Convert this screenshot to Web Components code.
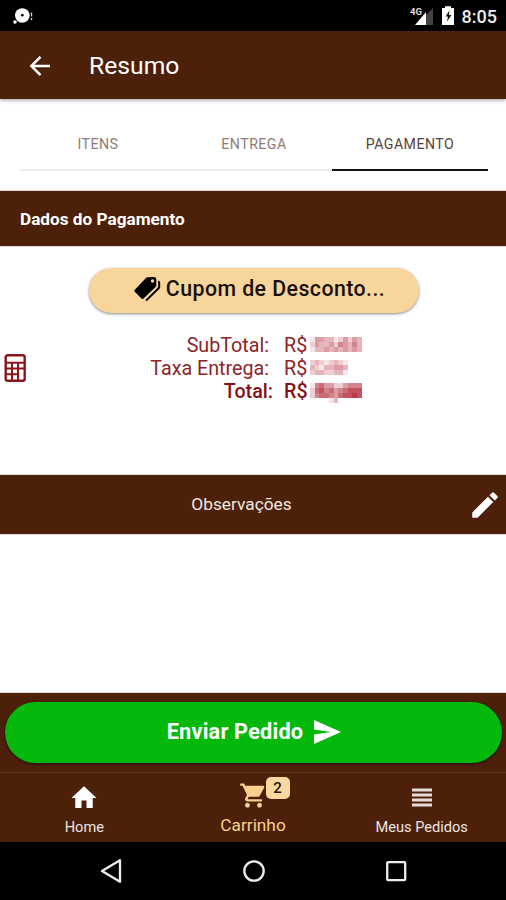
<!DOCTYPE html>
<html lang="pt-BR"><head><meta charset="utf-8"><title>Resumo</title>
<style>html,body{margin:0;height:100%;overflow:hidden;background:#fff;font-family:Roboto,sans-serif}</style></head>
<body><order-screen></order-screen>
<script>
const define=(name,markup)=>customElements.define(name,class extends HTMLElement{
  constructor(){super();const t=document.createElement('template');t.innerHTML=markup;this.attachShadow({mode:'open'}).appendChild(t.content.cloneNode(true));}
});

define('status-bar',`<style>
:host{display:flex;height:31px;box-sizing:border-box;background:#000;color:#eee;align-items:center;padding:0 9px 0 13px}
.sp{flex:1}.time{font-size:18px;font-weight:500;line-height:31px;padding-top:2px;margin-left:4px}
svg{display:block}
</style>
<svg width="21" height="31"><circle cx="9.3" cy="15.5" r="7.3" fill="#fff"/><circle cx="9.3" cy="15.2" r="1.4" fill="#111"/><circle cx="2" cy="22" r="1.8" fill="#fff"/><path d="M18.5 12.5v4M18.5 18v2" stroke="#ccc" stroke-width="1.4"/></svg>
<span class="sp"></span>
<svg width="48" height="31"><path d="M23 8v17H6z" fill="#444"/><path d="M16 12v13H5z" fill="#fff"/><text x="0" y="15" font-size="9.5" font-weight="700" fill="#ddd" textLength="12" lengthAdjust="spacingAndGlyphs">4G</text><path d="M32 8h3V6.300h6V8h3v17H32z" fill="#fff"/><path d="M39.500 10.500l-4 6h2.500l-1 5 4.500-6.500H39z" fill="#111"/></svg>
<span class="time">8:05</span>`);

define('title-bar',`<style>
:host{display:flex;height:68px;background:#4d2009;color:#fff;align-items:center;padding:2px 0 0 28px;box-shadow:0 1px 4px #0006;position:relative;z-index:1;box-sizing:border-box}
svg{display:block;margin-right:37px}.t{font-size:24.700px;line-height:30px}
</style><svg width="24" height="24" viewBox="0 0 24 24"><path d="M22 12H4M12.500 2.800L3.300 12l9.200 9.200" fill="none" stroke="#fff" stroke-width="2.500"/></svg><span class="t"><slot></slot></span>`);

define('tab-item',`<style>
:host{display:block;flex:1;text-align:center;font-size:14.200px;letter-spacing:.45px;line-height:20px;color:#8f7b74;height:37px;border-bottom:2px solid #ececec;box-sizing:border-box}
:host([active]){color:#58423a;border-color:#111}
</style><slot></slot>`);

define('tab-strip',`<style>:host{display:flex;height:92px;box-sizing:border-box;padding:35px 18px 0 20px}</style><slot></slot>`);

define('section-bar',`<style>
:host{display:flex;align-items:center;background:#4d2009;color:#fff;box-sizing:border-box;height:55px;padding:0 20px;font-size:17.200px;font-weight:700;box-shadow:0 0 1px #4d2009}
</style><slot></slot>`);

define('coupon-button',`<style>
:host{display:flex;width:330px;height:45px;border-radius:23px;background:#f8d59b;color:#17110a;align-items:center;justify-content:center;box-shadow:0 1px 3px #0007;margin:0 0 0 89px;font-weight:500;font-size:21.300px;letter-spacing:.45px;box-sizing:border-box;padding:0 0 4px 11px}
svg{margin-right:4px;margin-top:0}
</style><svg width="28" height="26" viewBox="0 0 28 26"><path d="M13.500 1.200L20 1q2.200 0 2.300 2.200v6.300q0 .8-.7 1.500L9.500 22.500q-1 1-2 0L.8 15.700q-1-1 0-2L12 1.900q.7-.7 1.500-.7z" fill="#000"/><circle cx="18.500" cy="5" r="1.700" fill="#f8d59b"/><path d="M24.200 4.500q2 .3 2 2v4.800q0 .8-.7 1.500L12.700 25.300l-1.400-1.300 12.300-12.200q.6-.6.6-1.500z" fill="#000"/></svg><slot></slot>`);

// Masked amount: a grid of colour cells described by rows of shade digits.
customElements.define('masked-amount',class extends HTMLElement{
  constructor(){super();const s=this.attachShadow({mode:'open'});
    const rows=this.getAttribute('rows').split('/');
    s.innerHTML='<style>:host{display:block}svg{display:block}</style><svg width="54" height="20" shape-rendering="crispEdges">'+
      rows.map((r,y)=>[...r].map((d,x)=>d==='0'?'':`<rect x="${x*4.7}" y="${y*5}" width="4.7" height="5" fill="rgba(165,10,25,${d/10})"/>`).join('')).join('')+'</svg>';
  }
});

define('price-row',`<style>
:host{display:grid;grid-template-columns:1fr 24px 54px;height:23px;line-height:23px;font-size:19.700px;color:#8d2428;align-items:start}
:host([bold]){font-weight:500;color:#861015}
.l{text-align:right;padding-right:15px;letter-spacing:0}:host([bold]) .l{padding-right:11px}
.m{padding:3px 0 0 2px}
</style><span class="l"><slot></slot></span><span>R$</span><span class="m"><slot name="amount"></slot></span>`);

define('payment-panel',`<style>
:host{display:block;height:229px;box-sizing:border-box;padding-top:22px}
.row{display:grid;grid-template-columns:28px 334px;margin-top:20px;align-items:center}.rows{padding-top:1px}
</style><coupon-button>Cupom de Desconto...</coupon-button>
<div class="row"><svg width="28" height="30" viewBox="0 0 28 30"><rect x="5.700" y="2.200" width="19" height="25.500" rx="2" fill="none" stroke="#8b151b" stroke-width="2.400"/><path d="M6 9.700h18M6 15.500h18M6 21.300h11.500M12 10v17M18 10v17" stroke="#8b151b" stroke-width="2"/></svg>
<div class="rows"><price-row>SubTotal:<masked-amount slot="amount" rows="14433124243/24334254353/13343434343"></masked-amount></price-row>
<price-row>Taxa Entrega:<masked-amount slot="amount" rows="23212321/32133443/23322331"></masked-amount></price-row>
<price-row bold>Total:<masked-amount slot="amount" rows="15644224555/26756456777/25665467787/00001300000"></masked-amount></price-row></div></div>`);

define('notes-bar',`<style>
:host{display:grid;grid-template-columns:34px 1fr 34px;height:59px;align-items:center;background:#4d2009;color:#f1e6e2;text-align:center;font-size:17.300px;box-sizing:border-box;padding:0 4px 0 10px;box-shadow:0 0 1px #4d2009}
.t{margin-right:29px;margin-top:-1px}
</style><i></i><span class="t"><slot></slot></span><svg width="34" height="34" viewBox="0 0 24 24"><path d="M3 17.250V21h3.750L17.810 9.940l-3.750-3.750L3 17.250zM20.710 7.040a1 1 0 0 0 0-1.410l-2.340-2.340a1 1 0 0 0-1.410 0l-1.830 1.830 3.750 3.750 1.830-1.830z" fill="#fff"/></svg>`);

define('send-button',`<style>
:host{display:flex;height:61px;border-radius:31px;background:#04b80c;color:#fff;align-items:center;justify-content:center;font-size:21.700px;letter-spacing:.2px;font-weight:700;box-shadow:0 1px 3px #0009;box-sizing:border-box;padding:0 0 2px 1px}
svg{margin-left:11px}
</style><slot></slot><svg width="27" height="24" viewBox="0 0 27 24"><path d="M0 0L27 12 0 24V14.500L17 12 0 9.500z" fill="#fff"/></svg>`);

define('nav-item',`<style>
:host{display:grid;grid-template-rows:28px 1fr;justify-items:center;flex:1 1 0;min-width:0;color:#eee4e0;font-size:14.600px;line-height:22px;padding-top:10px;box-sizing:border-box}
:host([active]){color:#f8d18f;font-size:17.300px}
.i{position:relative;height:28px}.label{padding-top:5px}:host([active]) .label{padding-top:3px}
</style><div class="i"><slot name="icon"></slot></div><span class="label"><slot></slot></span>`);

define('count-badge',`<style>:host{position:absolute;left:27px;top:-6px;width:24px;height:22px;border-radius:5px;background:#fad9a0;color:#20150b;text-align:center;font-size:15px;line-height:23px;font-weight:500}</style><slot></slot>`);

define('bottom-nav',`<style>
:host{display:flex;height:70px;border-top:1px solid #63351f;box-sizing:border-box;margin-top:9px}
svg{display:block}
</style>
<nav-item><svg slot="icon" width="30" height="30" viewBox="0 0 24 24"><path d="M10 20v-6h4v6h5v-8h3L12 2.600 2 12h3v8z" fill="#fff"/></svg>Home</nav-item>
<nav-item active><svg slot="icon" width="29" height="29" viewBox="0 0 24 24" style="margin-top:-2px"><path d="M7 18c-1.100 0-2 .9-2 2s.9 2 2 2 2-.9 2-2-.9-2-2-2zM1 2v2h2l3.600 7.590-1.350 2.450C4.520 15.370 5.480 17 7 17h12v-2H7.420a.25.25 0 0 1-.25-.25l.93-1.750h7.450c.75 0 1.410-.41 1.750-1.030l3.580-6.490A1 1 0 0 0 20 4H5.210l-.94-2H1zm16 16c-1.100 0-2 .9-2 2s.9 2 2 2 2-.9 2-2-.9-2-2-2z" fill="#f8d18f"/></svg><count-badge slot="icon">2</count-badge>Carrinho</nav-item>
<nav-item><svg slot="icon" width="20" height="28"><path d="M0 7h20M0 12h20M0 17h20M0 22h20" stroke="#e8dcd8" stroke-width="2.900"/></svg>Meus Pedidos</nav-item>`);

define('action-footer',`<style>:host{display:block;background:#4d2009;height:149px;box-sizing:border-box;padding-top:9px;box-shadow:0 0 1px #4d2009}send-button{margin:0 4px 0 5px}</style>
<send-button>Enviar Pedido</send-button><bottom-nav></bottom-nav>`);

define('system-nav',`<style>:host{display:grid;grid-template-columns:24px 24px 24px;gap:118px;height:58px;background:#000;justify-content:center;align-items:center;padding-left:2px;box-sizing:border-box}svg{display:block}</style>
<svg width="24" height="26"><path d="M20 2.300v21.500L2 13z" fill="none" stroke="#eee" stroke-width="2.300" stroke-linejoin="round"/></svg>
<svg width="24" height="26"><circle cx="12" cy="13" r="9.700" fill="none" stroke="#eee" stroke-width="2.300"/></svg>
<svg width="24" height="26"><rect x="3.200" y="4.200" width="18" height="18" rx="1" fill="none" stroke="#eee" stroke-width="2.300"/></svg>`);

define('order-screen',`<style>:host{display:flex;flex-direction:column;width:506px;height:900px;background:#fff}.blank{height:159px}</style>
<status-bar></status-bar><title-bar>Resumo</title-bar>
<tab-strip><tab-item>ITENS</tab-item><tab-item>ENTREGA</tab-item><tab-item active>PAGAMENTO</tab-item></tab-strip>
<section-bar>Dados do Pagamento</section-bar><payment-panel></payment-panel>
<notes-bar>Observações</notes-bar><div class="blank"></div><action-footer></action-footer><system-nav></system-nav>`);
</script></body></html>
